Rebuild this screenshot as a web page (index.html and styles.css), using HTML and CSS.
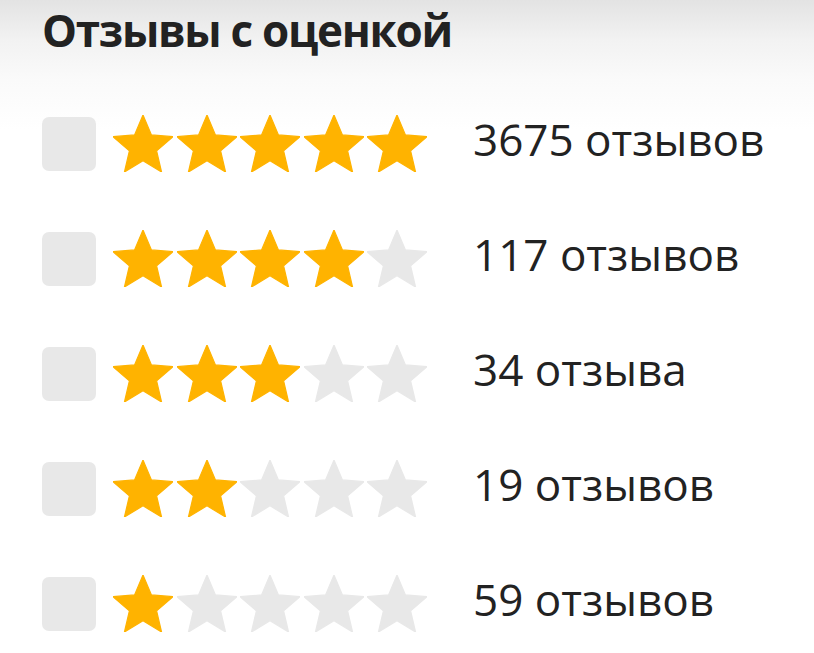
FILE: index.html
```html
<!DOCTYPE html>
<html lang="ru">
<head>
<meta charset="utf-8">
<link rel="stylesheet" href="styles.css">
<title>Отзывы с оценкой</title>
</head>
<body>
<svg class="defs" width="0" height="0" aria-hidden="true">
  <symbol id="star" viewBox="2 2 20 19">
    <path d="M12 17.27L18.18 21l-1.64-7.03L22 9.24l-7.19-.61L12 2 9.19 8.63 2 9.24l5.46 4.73L5.82 21z" stroke-linejoin="round" stroke-width="0.4"/>
  </symbol>
</svg>
<section class="filter">
  <h2 class="filter-title">Отзывы с оценкой</h2>
  <ul class="rating-list">
    <li class="rating-row">
      <span class="checkbox"></span>
      <span class="stars">
        <svg class="star on"><use href="#star"/></svg>
        <svg class="star on"><use href="#star"/></svg>
        <svg class="star on"><use href="#star"/></svg>
        <svg class="star on"><use href="#star"/></svg>
        <svg class="star on"><use href="#star"/></svg>
      </span>
      <span class="count">3675 отзывов</span>
    </li>
    <li class="rating-row">
      <span class="checkbox"></span>
      <span class="stars">
        <svg class="star on"><use href="#star"/></svg>
        <svg class="star on"><use href="#star"/></svg>
        <svg class="star on"><use href="#star"/></svg>
        <svg class="star on"><use href="#star"/></svg>
        <svg class="star"><use href="#star"/></svg>
      </span>
      <span class="count">117 отзывов</span>
    </li>
    <li class="rating-row">
      <span class="checkbox"></span>
      <span class="stars">
        <svg class="star on"><use href="#star"/></svg>
        <svg class="star on"><use href="#star"/></svg>
        <svg class="star on"><use href="#star"/></svg>
        <svg class="star"><use href="#star"/></svg>
        <svg class="star"><use href="#star"/></svg>
      </span>
      <span class="count">34 отзыва</span>
    </li>
    <li class="rating-row">
      <span class="checkbox"></span>
      <span class="stars">
        <svg class="star on"><use href="#star"/></svg>
        <svg class="star on"><use href="#star"/></svg>
        <svg class="star"><use href="#star"/></svg>
        <svg class="star"><use href="#star"/></svg>
        <svg class="star"><use href="#star"/></svg>
      </span>
      <span class="count">19 отзывов</span>
    </li>
    <li class="rating-row">
      <span class="checkbox"></span>
      <span class="stars">
        <svg class="star on"><use href="#star"/></svg>
        <svg class="star"><use href="#star"/></svg>
        <svg class="star"><use href="#star"/></svg>
        <svg class="star"><use href="#star"/></svg>
        <svg class="star"><use href="#star"/></svg>
      </span>
      <span class="count">59 отзывов</span>
    </li>
  </ul>
</section>
</body>
</html>
```
FILE: styles.css
```css
html {
  background: #ffffff;
}

html, body {
  margin: 0;
  padding: 0;
}

body {
  min-height: 653px;
  background: linear-gradient(to bottom, #e3e3e3 0px, #f2f2f2 40px, #fafafa 80px, #ffffff 130px, #ffffff 100%) no-repeat;
  background-size: 100% 653px;
  font-family: "Open Sans", "Noto Sans", sans-serif;
  color: #222;
}

.defs {
  position: absolute;
  width: 0;
  height: 0;
}

.filter {
  padding-left: 42px;
}

.filter-title {
  margin: 0;
  height: 86px;
  font-size: 44px;
  line-height: 60px;
  font-weight: 700;
  letter-spacing: -1.3px;
}

.rating-list {
  list-style: none;
  margin: 0;
  padding: 0;
}

.rating-row {
  display: flex;
  align-items: center;
  height: 115px;
}

.checkbox {
  width: 54px;
  height: 54px;
  border-radius: 7px;
  background: #e8e8e8;
  flex: none;
}

.stars {
  display: flex;
  gap: 3.5px;
  margin-left: 17px;
  margin-right: 46px;
}

.star {
  width: 60px;
  height: 57px;
  fill: #e8e8e8;
  stroke: #e8e8e8;
}

.star.on {
  fill: #ffb300;
  stroke: #ffb300;
}

.count {
  font-size: 44px;
  line-height: 1;
  padding-bottom: 9px;
  color: #222;
}
```
